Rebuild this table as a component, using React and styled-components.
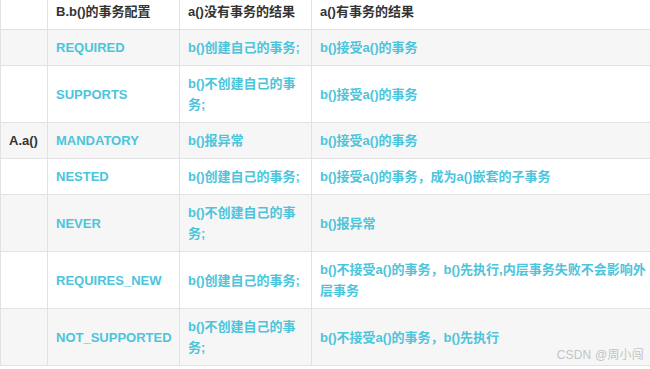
import React from "react";
import styled, { createGlobalStyle } from "styled-components";

const Global = createGlobalStyle`
  html, body { margin: 0; padding: 0; background: #fff; overflow: hidden; }
  body { width: 650px; height: 369px; }
`;

const Page = styled.div`
  position: relative;
  width: 650px;
  height: 369px;
  overflow: hidden;
  font-family: "Liberation Sans", "Noto Sans CJK SC", sans-serif;
`;

const Table = styled.table`
  margin-top: -7px;
  table-layout: fixed;
  border-collapse: collapse;
  width: 662px;
  font-size: 13px;
  font-weight: bold;
  line-height: 21px;
`;

const Row = styled.tr`
  background: ${(p) => (p.$striped ? "#f6f6f6" : "#ffffff")};
`;

const HeadCell = styled.th`
  border: 1px solid #e2e2e2;
  padding: 7px 8px;
  text-align: left;
  color: #333333;
  font-weight: bold;
  vertical-align: middle;
`;

const Cell = styled.td`
  border: 1px solid #e2e2e2;
  padding: 7px 8px;
  vertical-align: middle;
  color: ${(p) => (p.$dark ? "#333333" : "#4cc4db")};
`;

const Watermark = styled.div`
  position: absolute;
  right: 6px;
  bottom: 7px;
  font-size: 12px;
  color: #c4c4c4;
  font-weight: normal;
  letter-spacing: 0.2px;
`;

const rows = [
  ["", "REQUIRED", "b()创建自己的事务;", "b()接受a()的事务"],
  ["", "SUPPORTS", "b()不创建自己的事务;", "b()接受a()的事务"],
  ["A.a()", "MANDATORY", "b()报异常", "b()接受a()的事务"],
  ["", "NESTED", "b()创建自己的事务;", "b()接受a()的事务，成为a()嵌套的子事务"],
  ["", "NEVER", "b()不创建自己的事务;", "b()报异常"],
  ["", "REQUIRES_NEW", "b()创建自己的事务;", "b()不接受a()的事务，b()先执行,内层事务失败不会影响外层事务"],
  ["", "NOT_SUPPORTED", "b()不创建自己的事务;", "b()不接受a()的事务，b()先执行"],
];

export default function App() {
  return (
    <Page>
      <Global />
      <Table>
        <colgroup>
          <col style={{ width: 47 }} />
          <col style={{ width: 132 }} />
          <col style={{ width: 132 }} />
          <col style={{ width: 351 }} />
        </colgroup>
        <thead>
          <Row>
            <HeadCell></HeadCell>
            <HeadCell>B.b()的事务配置</HeadCell>
            <HeadCell>a()没有事务的结果</HeadCell>
            <HeadCell>a()有事务的结果</HeadCell>
          </Row>
        </thead>
        <tbody>
          {rows.map((r, i) => (
            <Row key={i} $striped={i % 2 === 0}>
              <Cell $dark>{r[0]}</Cell>
              <Cell>{r[1]}</Cell>
              <Cell>{r[2]}</Cell>
              <Cell>{r[3]}</Cell>
            </Row>
          ))}
        </tbody>
      </Table>
      <Watermark>CSDN @周小闯</Watermark>
    </Page>
  );
}
